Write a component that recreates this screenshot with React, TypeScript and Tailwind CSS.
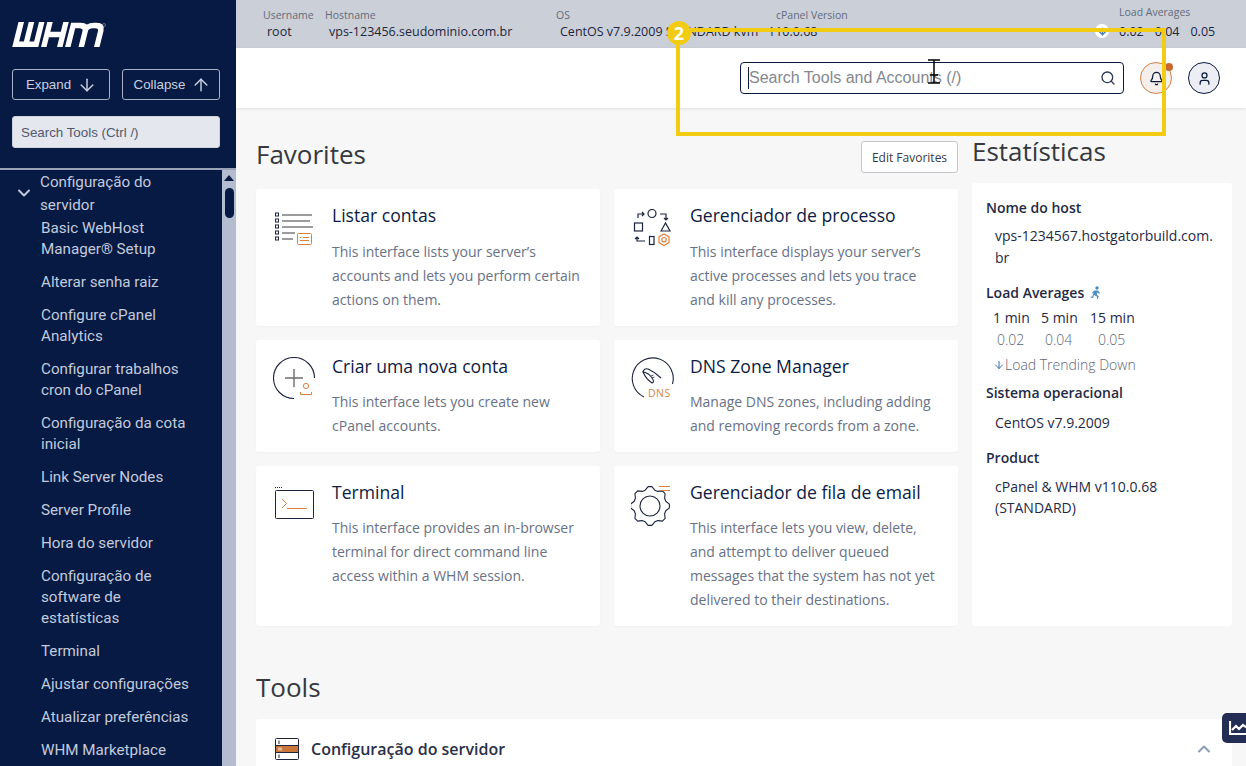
import React from "react";
import { ArrowDown, ArrowUp, Bell, ChevronDown, ChevronUp, Search, User } from "lucide-react";

const sideItems = [
  ["Basic WebHost", "Manager® Setup"],
  ["Alterar senha raiz"],
  ["Configure cPanel", "Analytics"],
  ["Configurar trabalhos", "cron do cPanel"],
  ["Configuração da cota", "inicial"],
  ["Link Server Nodes"],
  ["Server Profile"],
  ["Hora do servidor"],
  ["Configuração de", "software de", "estatísticas"],
  ["Terminal"],
  ["Ajustar configurações"],
  ["Atualizar preferências"],
  ["WHM Marketplace"],
];

const WhmLogo = () => (
  <svg width="96" height="26" viewBox="0 0 96 26" aria-label="WHM">
    <g fill="none" stroke="#fff" strokeWidth="5.5" transform="translate(6.500 0) skewX(-14)">
      <path d="M2.750 0V22.300H23.250V0M13 0V22.300" />
      <path d="M31.500 0V25M47.500 0V25M31.500 12.500H47.500" />
      <path d="M55.500 25V3.500H62Q69 3.500 69 9V25M69 9Q69 3.500 76 3.500H78Q84.500 3.500 84.500 9V25" />
    </g>
    <circle cx="92" cy="3" r="1.500" fill="none" stroke="#9aa2b5" strokeWidth="0.6" />
  </svg>
);

const ListIcon = () => (
  <svg width="42" height="38" viewBox="0 0 42 38" fill="none">
    {[5, 11, 17, 23, 29].map((y) => (
      <rect key={y} x="2.500" y={y - 1} width="3" height="3" stroke="#1c2540" strokeWidth="1" />
    ))}
    <path d="M9 6H39M9 12H37M9 18H40M9 24H22M9 30H20" stroke="#7c7c7c" strokeWidth="1.400" />
    <rect x="24.500" y="24.500" width="14" height="11" rx="1" stroke="#d9823f" />
    <path d="M27 28.500h1.500M30 28.500h6M27 31.500h9" stroke="#d9823f" />
  </svg>
);

const ProcessIcon = () => (
  <svg width="42" height="38" viewBox="0 0 42 38" fill="none" stroke="#1c2540" strokeWidth="1.200">
    <circle cx="21" cy="4.500" r="4" />
    <path d="M7 9V5H13M11 3l2 2-2 2M29 5H35V11M33 9l2 2 2-2" />
    <rect x="3.500" y="14" width="8" height="8" />
    <path d="M30 22l4.500-8 4.500 8z" />
    <path d="M14 32H6V28M4 30l2-2 2 2" />
    <rect x="18.500" y="27.500" width="4.500" height="8" />
    <g stroke="#d9823f">
      <path d="M33 25l5 2.900v5.700l-5 2.900-5-2.900v-5.700z" />
      <circle cx="33" cy="30.700" r="2.200" />
    </g>
  </svg>
);

const AddIcon = () => (
  <svg width="44" height="44" viewBox="0 0 44 44" fill="none" className="-mt-[3px]">
    <path d="M21 41.500A20.500 20.500 0 1 1 41.500 21" stroke="#1c2540" strokeWidth="1.100" />
    <path d="M21 12V30M12 21H30" stroke="#6e6e6e" strokeWidth="1.400" />
    <circle cx="33" cy="29" r="2.600" stroke="#d9823f" />
    <path d="M27.500 35v2.500h11V35" stroke="#d9823f" />
  </svg>
);

const DnsIcon = () => (
  <svg width="44" height="44" viewBox="0 0 44 44" fill="none" className="-mt-[3px]">
    <path d="M13 40A20.500 20.500 0 1 1 41.500 27" stroke="#1c2540" strokeWidth="1.100" />
    <path d="M12 15Q13 11 17 12Q24 15 30 21M12 15Q18 16 21 21Q24 25 21 26Q15 22 12 15Z" stroke="#1c2540" strokeWidth="1.100" />
    <path d="M20 19l2.500-1M21 21l2.500-1" stroke="#1c2540" strokeWidth="0.800" />
    <text x="17" y="40" fill="#d9823f" fontSize="10.500" fontFamily="'Open Sans', sans-serif" letterSpacing="0.500">DNS</text>
  </svg>
);

const TerminalIcon = () => (
  <svg width="42" height="34" viewBox="0 0 42 34" fill="none">
    <path d="M2 1.500H10" stroke="#1c2540" strokeDasharray="1 1" />
    <rect x="2.500" y="4.500" width="38" height="28" rx="1" stroke="#1c2540" />
    <path d="M9 13l4.500 4.500L9 22M14 22.500H34" stroke="#d9823f" />
  </svg>
);

// eight rounded teeth around the centre
const gearPoints = Array.from({ length: 32 }, (_, i) => {
  const a = ((i - 0.5) * Math.PI) / 16;
  const r = i % 4 === 0 || i % 4 === 1 ? 19.5 : 16.5;
  return `${(19 + r * Math.cos(a)).toFixed(1)},${(20 + r * Math.sin(a)).toFixed(1)}`;
}).join(" ");

const GearIcon = () => (
  <svg width="42" height="42" viewBox="0 0 42 42" fill="none">
    <circle cx="19" cy="20" r="10" stroke="#1c2540" strokeWidth="1.100" />
    <polygon points={gearPoints} stroke="#1c2540" strokeWidth="1.100" strokeLinejoin="round" />
    <path d="M28 0.500H39M30 4.500H39" stroke="#d9823f" />
  </svg>
);

const ServerIcon = () => (
  <svg width="24" height="22" viewBox="0 0 24 22" fill="none">
    <rect x="0.500" y="0.500" width="23" height="21" rx="1" fill="#fff" stroke="#1c2540" />
    <rect x="1" y="7.500" width="22" height="7" fill="#c9773a" />
    <path d="M0.500 7.500H23.500M0.500 14.500H23.500" stroke="#1c2540" />
    <path d="M4 2.500V6M4 16.500V20" stroke="#1c2540" />
    <path d="M4 9.500V12.500M6 9.500V12.500" stroke="#fff" />
  </svg>
);

const favorites = [
  {
    icon: <ListIcon />,
    title: "Listar contas",
    desc: ["This interface lists your server’s", "accounts and lets you perform certain", "actions on them."],
    h: "h-[137px]",
    gap: "mt-[12px]",
  },
  {
    icon: <ProcessIcon />,
    title: "Gerenciador de processo",
    desc: ["This interface displays your server’s", "active processes and lets you trace", "and kill any processes."],
    h: "h-[137px]",
    gap: "mt-[12px]",
  },
  {
    icon: <AddIcon />,
    title: "Criar uma nova conta",
    desc: ["This interface lets you create new", "cPanel accounts."],
    h: "h-[112px]",
    gap: "mt-[11px]",
  },
  {
    icon: <DnsIcon />,
    title: "DNS Zone Manager",
    desc: ["Manage DNS zones, including adding", "and removing records from a zone."],
    h: "h-[112px]",
    gap: "mt-[11px]",
  },
  {
    icon: <TerminalIcon />,
    title: "Terminal",
    desc: ["This interface provides an in-browser", "terminal for direct command line", "access within a WHM session."],
    h: "h-[160px]",
    gap: "mt-[11px]",
  },
  {
    icon: <GearIcon />,
    title: "Gerenciador de fila de email",
    desc: [
      "This interface lets you view, delete,",
      "and attempt to deliver queued",
      "messages that the system has not yet",
      "delivered to their destinations.",
    ],
    h: "h-[160px]",
    gap: "mt-[11px]",
  },
];

const Sidebar = () => (
  <aside className="flex h-full w-[236px] shrink-0 flex-col bg-[#071a43] font-['Roboto',sans-serif]">
    <div className="h-[168px] shrink-0 pl-3 pr-4 pt-[22px]">
      <div className="h-[26px]">
        <WhmLogo />
      </div>
      <div className="mt-[21px] flex justify-between font-['Liberation_Sans',sans-serif] text-[13.33px] text-[#c9d0e0]">
        <button className="flex h-[31px] w-[98px] items-center justify-center gap-[6px] rounded-[3px] border border-[#a9b1c4] pl-[1px]">
          Expand <ArrowDown size={20} strokeWidth={1.75} />
        </button>
        <button className="flex h-[31px] w-[98px] items-center justify-center gap-[6px] rounded-[3px] border border-[#a9b1c4] pl-[3px]">
          Collapse <ArrowUp size={20} strokeWidth={1.75} />
        </button>
      </div>
      <div className="mt-4 flex h-8 w-[208px] items-center rounded-[3px] border border-[#cfd3dc] bg-[#e4e7ee] pl-[8px] pr-[9px] pt-[1px] font-['Liberation_Sans',sans-serif] text-[13.33px] text-[#4f5a70]">
        Search Tools (Ctrl /)
      </div>
    </div>
    <div className="h-[2px] shrink-0 bg-[#9aa2b5]" />
    <div className="flex min-h-0 flex-1">
      <nav className="min-w-0 flex-1 overflow-hidden text-[15.2px] text-[#c3cbdd]">
        <div className="flex h-[46px] items-center">
          <ChevronDown size={20} strokeWidth={2.25} className="ml-[14px] mr-[6px]" />
          <div className="mt-[2px] leading-[23px]">
            Configuração do
            <br />
            servidor
          </div>
        </div>
        <ul className="ml-[41px] mt-[2px] flex flex-col gap-3 pr-2 leading-[21px]">
          {sideItems.map((lines) => (
            <li key={lines[0]}>
              {lines.map((l) => (
                <div key={l} className="whitespace-nowrap">{l}</div>
              ))}
            </li>
          ))}
        </ul>
      </nav>
      <div className="flex w-[14px] shrink-0 flex-col items-center bg-[#b4bcd0] pt-[5px]">
        <div className="h-0 w-0 border-x-[5px] border-b-[6px] border-x-transparent border-b-[#071a43]" />
        <div className="mt-[7px] h-[30px] w-[9px] rounded-full bg-[#071a43]" />
      </div>
    </div>
  </aside>
);

const StatusBar = () => (
  <div className="flex h-[48px] shrink-0 bg-[#cbd0d8] pl-[27px] font-['Open_Sans',sans-serif] text-[12.5px] text-[#1b2640]">
    <div className="w-[62px] pt-[8px]">
      <div className="text-[10.5px] leading-[15px] text-[#626b7d]">Username</div>
      <div className="pl-1 leading-[18px]">root</div>
    </div>
    <div className="w-[231px] pt-[8px]">
      <div className="text-[10.5px] leading-[15px] text-[#626b7d]">Hostname</div>
      <div className="pl-1 leading-[18px]">vps-123456.seudominio.com.br</div>
    </div>
    <div className="w-[220px] pt-[8px]">
      <div className="text-[10.5px] leading-[15px] text-[#626b7d]">OS</div>
      <div className="whitespace-nowrap pl-1 leading-[18px]">CentOS v7.9.2009 STANDARD kvm</div>
    </div>
    <div className="w-[343px] pt-[8px]">
      <div className="text-[10.5px] leading-[15px] text-[#626b7d]">cPanel Version</div>
      <div className="-ml-2 leading-[18px]">110.0.68</div>
    </div>
    <div className="relative pt-[5px]">
      <div className="text-[10.5px] leading-[15px] text-[#626b7d]">Load Averages</div>
      <div className="mt-[3px] flex gap-[11px] leading-[18px]">
        <span>0.02</span>
        <span>0.04</span>
        <span>0.05</span>
      </div>
      <div className="absolute -left-[24px] top-[24px] flex h-[14px] w-[14px] items-center justify-center rounded-full bg-white text-[#4a7fb5]">
        <ArrowDown size={11} strokeWidth={3} />
      </div>
    </div>
  </div>
);

const Header = () => (
  <div className="relative flex h-[60px] shrink-0 items-center justify-end bg-white pr-[26px] shadow-[0_1px_3px_rgba(0,0,0,0.1)]">
    <div className="flex h-8 w-[384px] items-center justify-between rounded-[4px] border border-[#0a1a40] pl-[8px] pr-[7px] font-['Liberation_Sans',sans-serif] text-[16px] text-[#83888f]">
      <span className="-ml-[1px] border-l border-[#0a1a40] leading-[22px]">Search Tools and Accounts (/)</span>
      <Search size={16} className="text-[#2b3853]" />
    </div>
    <div className="relative ml-4 flex h-8 w-8 items-center justify-center rounded-full border border-[#d4804a] bg-[#f5efeb]">
      <Bell size={15} strokeWidth={2} className="text-[#0a1a40]" />
      <span className="absolute -right-[2px] top-0 h-2 w-2 rounded-full bg-[#c8682f]" />
    </div>
    <div className="ml-4 flex h-8 w-8 items-center justify-center rounded-full border border-[#0a1a40] bg-[#eceef4]">
      <User size={15} className="text-[#0a1a40]" />
    </div>
  </div>
);

const Favorites = () => (
  <div className="w-[702px] shrink-0">
    <div className="flex h-[32px] items-center justify-between">
      <h2 className="-mt-[6px] text-[26px] text-[#36393f]">Favorites</h2>
      <button className="flex h-8 w-[97px] items-center justify-center rounded-[3px] border border-[#c4c7cc] bg-white pt-[1px] text-xs text-[#36393f]">
        Edit Favorites
      </button>
    </div>
    <div className="mt-4 grid grid-cols-[344px_344px] gap-[14px]">
      {favorites.map((f) => (
        <div key={f.title} className={`flex rounded-[3px] bg-white pl-[17px] pt-[14px] shadow-[0_1px_2px_rgba(0,0,0,0.03)] ${f.h}`}>
          <div className="w-[59px] shrink-0 pt-[6px]">{f.icon}</div>
          <div>
            <h3 className="text-[17.6px] leading-[25px] text-[#0c1c42]">{f.title}</h3>
            <div className={`text-sm leading-[24px] text-[#687186] ${f.gap}`}>
              {f.desc.map((l) => (
                <div key={l} className="whitespace-nowrap">{l}</div>
              ))}
            </div>
          </div>
        </div>
      ))}
    </div>
  </div>
);

const Stats = () => (
  <div className="-mt-[8px] w-[260px] shrink-0">
    <h2 className="text-[26px] leading-[36px] text-[#36393f]">Estatísticas</h2>
    <div className="mt-[14px] h-[443px] rounded-[3px] bg-white pl-[14px] pt-[14px] text-sm text-[#1f2a44]">
      <div className="font-semibold leading-[21px]">Nome do host</div>
      <div className="mt-[7px] pl-[9px] leading-[22px]">
        vps-1234567.hostgatorbuild.com.
        <br />
        br
      </div>
      <div className="mt-[13px] flex items-center gap-[6px] font-semibold leading-[21px]">
        Load Averages
        <svg width="11" height="13" viewBox="0 0 11 13" fill="#4a8fc7">
          <circle cx="7" cy="2" r="1.700" />
          <path d="M4 4.500h4l2 2.500-1 .7-1.500-1.500-.8 2.500 2 1.500-.8 2.800-1.200-.3.500-2L4 9l-1 3-2.500-.5.300-1 1.400.2L4 6 3 7.500l-1-.6z" />
        </svg>
      </div>
      <div className="mt-[4px] grid grid-cols-[48px_49px_auto] pl-[7px] leading-[21px]">
        <span>1 min</span>
        <span>5 min</span>
        <span>15 min</span>
        <span className="mt-[1px] pl-[4px] font-light text-[#5d6679]">0.02</span>
        <span className="mt-[1px] pl-[4px] font-light text-[#5d6679]">0.04</span>
        <span className="mt-[1px] pl-[8px] font-light text-[#5d6679]">0.05</span>
      </div>
      <div className="mt-[4px] flex items-center pl-[7px] font-light leading-[21px] text-[#5d6679]">
        <ArrowDown size={12} className="text-[#3a6ea5]" />
        Load Trending Down
      </div>
      <div className="mt-[7px] font-semibold leading-[21px]">Sistema operacional</div>
      <div className="mt-[9px] pl-[9px] leading-[21px]">CentOS v7.9.2009</div>
      <div className="mt-[14px] font-semibold leading-[21px]">Product</div>
      <div className="mt-[8px] pl-[9px] leading-[21px]">
        cPanel &amp; WHM v110.0.68
        <br />
        (STANDARD)
      </div>
    </div>
  </div>
);

export default function App() {
  return (
    <div className="relative flex h-[766px] w-[1246px] overflow-hidden bg-[#f7f7f7]">
      <Sidebar />
      <main className="flex min-w-0 flex-1 flex-col font-['Open_Sans',sans-serif]">
        <StatusBar />
        <Header />
        <div className="flex gap-[14px] pl-[20px] pt-[33px]">
          <Favorites />
          <Stats />
        </div>
        <div className="pl-[20px] pr-[14px]">
          <h2 className="mt-[43px] text-[26px] leading-[36px] text-[#36393f]">Tools</h2>
          <div className="mt-[14px] flex h-[60px] items-center rounded-t-[3px] bg-white pl-[19px] pr-[18px]">
            <ServerIcon />
            <span className="ml-3 text-base font-semibold text-[#2b3048]">Configuração do servidor</span>
            <ChevronUp size={20} strokeWidth={2.5} className="ml-auto text-[#8ba0b8]" />
          </div>
        </div>
      </main>

      {/* floating stats button */}
      <div className="absolute left-[1222px] top-[713px] flex h-[30px] w-[24px] items-start overflow-hidden rounded-l-[5px] bg-[#242e55] pl-[7px] pt-[7px]">
        <svg width="22" height="16" viewBox="0 0 22 16" fill="none" stroke="#fff" strokeWidth="2.200" className="shrink-0">
          <path d="M1 1V14H21" />
          <path d="M3 10l4-4 3 3 4-4 3 2 4-4" />
        </svg>
      </div>

      {/* tutorial highlight */}
      <div className="pointer-events-none absolute left-[676px] top-[28px] h-[108px] w-[490px] border-[4px] border-[#f2cb13]" />
      <div className="absolute left-[667px] top-[21px] flex h-6 w-6 items-center justify-center rounded-full bg-[#f2cb13] font-['Open_Sans',sans-serif] text-[18px] font-bold text-white">
        2
      </div>

      {/* mouse cursor */}
      <svg width="14" height="25" viewBox="0 0 14 25" fill="none" stroke="#000" strokeWidth="1.500" className="absolute left-[927px] top-[59px]">
        <path d="M1 1H13M1 24H13M7 1V24M3 16H11" />
      </svg>
    </div>
  );
}
